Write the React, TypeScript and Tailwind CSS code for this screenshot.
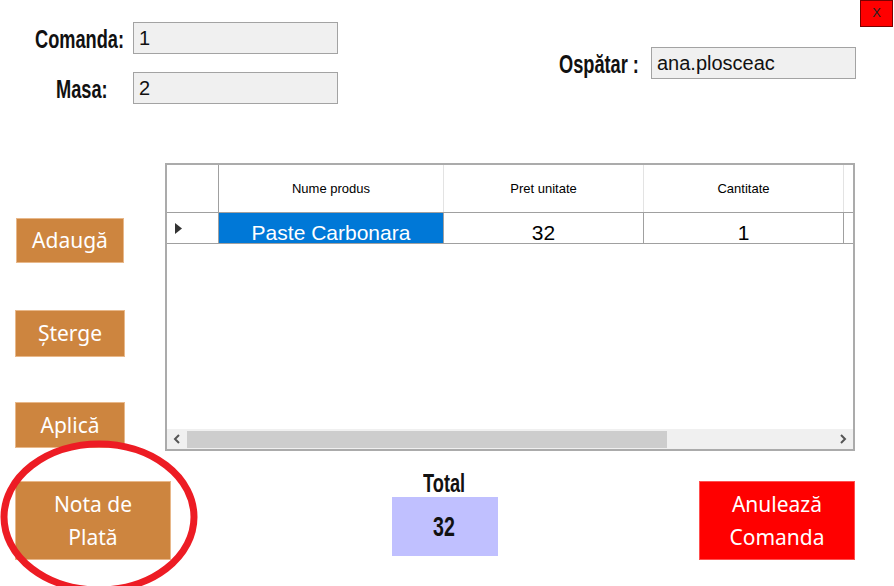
import React from 'react';

const labelFont = { fontFamily: '"Liberation Sans", Arial, sans-serif' };
const comicFont = { fontFamily: '"Comic Sans MS", "Noto Sans", "Liberation Sans", sans-serif' };
const sysFont = { fontFamily: '"Liberation Sans", Arial, sans-serif' };

const TextBox: React.FC<{ value: string }> = ({ value }) => (
  <div
    className="w-[205px] h-[32px] shrink-0 bg-[#f0f0f0] border border-[#a3a3a3] flex items-center pl-[5px] text-[20px] text-[#111]"
    style={sysFont}
  >
    {value}
  </div>
);

// condensed bold label, the app uses a narrow font
const Label: React.FC<{ text: string; className?: string }> = ({ text, className = '' }) => (
  <span
    className={`inline-block whitespace-nowrap text-[26px] font-bold text-[#111] leading-none scale-x-[0.7] origin-left ${className}`}
    style={labelFont}
  >
    {text}
  </span>
);

const OrderButton: React.FC<{ label: string; className: string }> = ({ label, className }) => (
  <button
    className={`bg-[#cd853f] border border-[#e8b88a] text-white text-[21px] leading-[33px] flex items-center justify-center ${className}`}
    style={comicFont}
  >
    {label}
  </button>
);

const columns = [
  { name: 'Nume produs', width: 'w-[225px]' },
  { name: 'Pret unitate', width: 'w-[200px]' },
  { name: 'Cantitate', width: 'w-[200px]' },
];

const App: React.FC = () => {
  return (
    <div className="relative w-[894px] h-[586px] bg-white overflow-hidden">
      {/* close */}
      <button
        className="absolute top-0 right-[1px] w-[33px] h-[27px] bg-[#ff0000] border border-[#7a0000] text-[13px] text-[#222] flex items-start justify-center pt-[2px]"
        style={sysFont}
      >
        X
      </button>

      {/* header fields */}
      <div className="h-[163px] flex pt-[22px]">
        <div className="flex flex-col gap-[18px]">
          <div className="flex items-center h-[32px]">
            <div className="w-[133px] shrink-0 pl-[35px] pt-[3px]">
              <Label text="Comanda:" />
            </div>
            <TextBox value="1" />
          </div>
          <div className="flex items-center h-[32px]">
            <div className="w-[133px] shrink-0 pl-[56px] pt-[3px]">
              <Label text="Masa:" />
            </div>
            <TextBox value="2" />
          </div>
        </div>
        <div className="ml-[221px] mt-[25px] flex items-center h-[32px]">
          <div className="w-[92px] shrink-0 pt-[3px]">
            <Label text="Ospătar :" />
          </div>
          <TextBox value="ana.plosceac" />
        </div>
      </div>

      {/* buttons + grid */}
      <div className="flex h-[287px]">
        <div className="w-[165px] shrink-0 flex flex-col pl-[15px]">
          <OrderButton label="Adaugă" className="mt-[55px] ml-[1px] w-[108px] h-[45px]" />
          <OrderButton label="Șterge" className="mt-[47px] w-[110px] h-[47px]" />
          <OrderButton label="Aplică" className="mt-[45px] w-[110px] h-[46px]" />
        </div>

        <div className="w-[690px] h-[288px] border-2 border-[#ababab] flex flex-col bg-white" style={sysFont}>
          <div className="h-[48px] flex border-b border-[#a0a0a0] shrink-0">
            <div className="w-[52px] border-r border-[#a0a0a0]" />
            {columns.map((c) => (
              <div
                key={c.name}
                className={`${c.width} border-r border-[#e3e3e3] flex items-center justify-center text-[13px] text-black`}
              >
                {c.name}
              </div>
            ))}
            <div className="flex-1" />
          </div>
          <div className="h-[31px] flex border-b border-[#a0a0a0] shrink-0">
            <div className="w-[52px] border-r border-[#a0a0a0] flex items-center pl-[8px]">
              <svg width="7" height="11" viewBox="0 0 7 11">
                <path d="M0 0 L7 5.5 L0 11 Z" fill="#333" />
              </svg>
            </div>
            <div className="w-[225px] border-r border-[#a0a0a0] bg-[#0078d7] text-white text-[21px] flex items-end justify-center leading-[20px] overflow-hidden">
              Paste Carbonara
            </div>
            <div className="w-[200px] border-r border-[#a0a0a0] text-black text-[21px] flex items-end justify-center leading-[20px] overflow-hidden">
              32
            </div>
            <div className="w-[200px] border-r border-[#a0a0a0] text-black text-[21px] flex items-end justify-center leading-[20px] overflow-hidden">
              1
            </div>
            <div className="flex-1" />
          </div>
          <div className="flex-1" />
          <div className="h-[20px] bg-[#f0f0f0] flex items-center shrink-0">
            <div className="w-[20px] flex items-center justify-center">
              <svg width="8" height="10" viewBox="0 0 8 10">
                <path d="M6 1 L2 5 L6 9" stroke="#555" strokeWidth="2" fill="none" />
              </svg>
            </div>
            <div className="w-[480px] h-[17px] bg-[#cdcdcd]" />
            <div className="flex-1" />
            <div className="w-[20px] flex items-center justify-center">
              <svg width="8" height="10" viewBox="0 0 8 10">
                <path d="M2 1 L6 5 L2 9" stroke="#555" strokeWidth="2" fill="none" />
              </svg>
            </div>
          </div>
        </div>
      </div>

      {/* bottom */}
      <div className="flex items-start">
        <button
          className="ml-[15px] mt-[31px] w-[156px] h-[79px] shrink-0 bg-[#cd853f] border border-[#e8b88a] text-white text-[21px] leading-[33px] flex flex-col items-center justify-center"
          style={comicFont}
        >
          <span>Nota de</span>
          <span>Plată</span>
        </button>
        <div className="ml-[221px] mt-[19px] flex flex-col items-center w-[106px] shrink-0">
          <div className="h-[28px] flex items-center justify-center w-full pl-[16px]">
            <Label text="Total" />
          </div>
          <div className="w-[106px] h-[59px] bg-[#c0c0ff] flex items-center justify-center pl-[7px]">
            <Label text="32" className="text-[28px]" />
          </div>
        </div>
        <button
          className="ml-[201px] mt-[31px] w-[156px] h-[79px] shrink-0 bg-[#ff0000] border border-[#ff5050] text-white text-[21px] leading-[33px] flex flex-col items-center justify-center"
          style={comicFont}
        >
          <span>Anulează</span>
          <span>Comanda</span>
        </button>
      </div>

      {/* annotation */}
      <svg className="absolute left-0 top-[438px] pointer-events-none" width="204" height="160" viewBox="0 0 204 160">
        <ellipse cx="99" cy="79" rx="95" ry="73" stroke="#ed1c24" strokeWidth="7" fill="none" />
      </svg>
    </div>
  );
};

export default App;
